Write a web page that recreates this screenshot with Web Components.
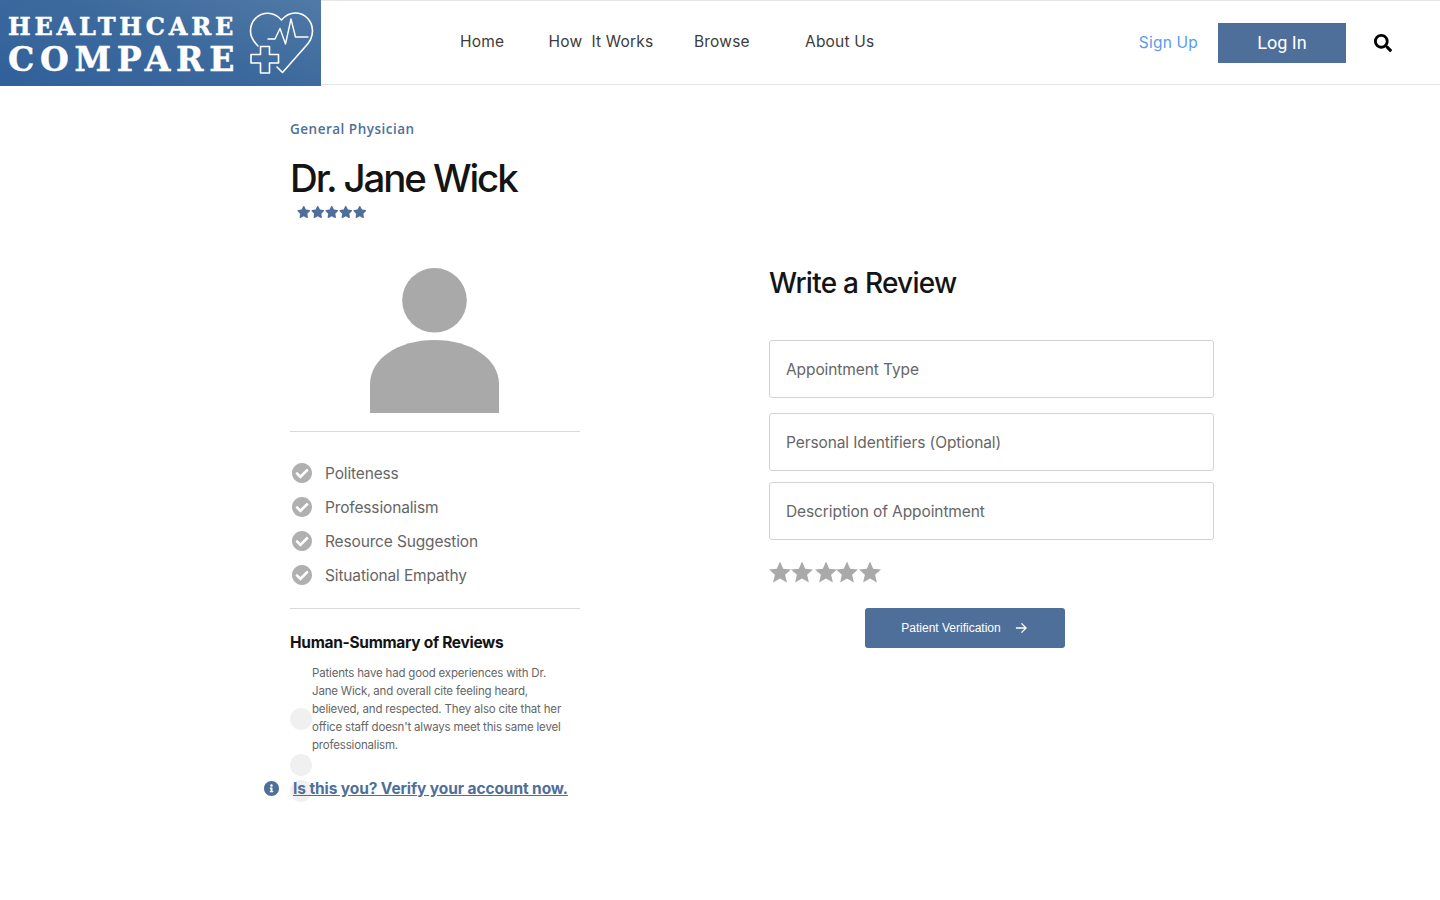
<!DOCTYPE html>
<html lang="en">
<head>
<meta charset="utf-8">
<title>Healthcare Compare</title>
<style>
html,body{margin:0;padding:0;background:#fff}
body{font-family:"Open Sans","Liberation Sans",sans-serif;min-height:900px}
</style>
</head>
<body>
<hc-header></hc-header>
<hc-main>
  <hc-profile slot="left"></hc-profile>
  <hc-review slot="right"></hc-review>
</hc-main>
<script>
const def=(name,html,init)=>customElements.define(name,class extends HTMLElement{
  constructor(){super();this.attachShadow({mode:'open'}).innerHTML=html;}
  connectedCallback(){init&&init(this)}
});
const FA_STAR='M259.3 17.8L194 150.2 47.9 171.5c-26.2 3.8-36.7 36.1-17.7 54.6l105.7 103-25 145.5c-4.5 26.3 23.2 46 46.4 33.7L288 439.6l130.7 68.7c23.2 12.2 50.9-7.4 46.4-33.7l-25-145.5 105.7-103c19-18.5 8.5-50.8-17.7-54.6L382 150.2 316.7 17.8c-11.7-23.6-45.6-23.9-57.4 0z';

def('hc-logo',`<style>
:host{display:flex;width:321px;height:86px;flex:none;box-sizing:border-box;padding:12px 0 0 8px;gap:13px;background:linear-gradient(200deg,#507aa6 0%,#3d6a9d 45%,#31609a 100%);color:#fff;font-family:"DejaVu Serif",serif;font-weight:700;overflow:hidden;-webkit-text-stroke:.5px #fff}
.t{display:flex;flex-direction:column;width:228px;flex:none}
.a{font-size:24px;line-height:30px;letter-spacing:3.800px;white-space:nowrap;height:30px}
.b{font-size:33px;line-height:38px;letter-spacing:5.700px;white-space:nowrap;margin-top:-1px}
svg{flex:none;margin-top:-1px}
</style><div class="t"><span class="a">HEALTHCARE</span><span class="b">COMPARE</span></div>
<svg width="66" height="66" viewBox="0 0 66 66" fill="none" stroke="#fff" stroke-width="1.6" stroke-linejoin="round" stroke-linecap="round">
<path d="M9 35C4 30 1.500 26 1.500 20C1.500 10 9 2.200 19 2.200C25 2.200 29 5 32.500 9C36 5 40.500 2 46 2C56 2 63.500 10 63.500 20C63.500 26 61 31 56 36L33.500 61.500L28 56"/>
<path d="M11.500 35.500H20.500V43.500H29.500V52H20.500V62H11.500V52H2V43.500H11.500Z"/>
<path d="M19 28H26L31 17.500L36.500 33L42 8L46.500 26H59" stroke-width="1.400"/>
</svg>`);

def('hc-nav',`<style>
:host{display:grid;grid-template-columns:88.5px 145.500px 111px auto;margin:-2px 0 0 139px;font:15.500px/20px "Inter","Open Sans",sans-serif;color:#3c3c3c;align-items:center;white-space:pre;letter-spacing:.2px}
</style><span>Home</span><span>How  It Works</span><span>Browse</span><span>About Us</span>`);

def('hc-header',`<style>
:host{display:flex;height:85px;box-sizing:border-box;border-top:1px solid #e6e6e6;border-bottom:1px solid #e6e6e6;align-items:flex-start}
.mid{display:flex;align-items:center;height:83px}
.right{margin-left:auto;display:flex;align-items:center;height:84px;padding-right:48px}
.su{font:15.500px/20px "Inter","Open Sans",sans-serif;color:#5a9bf0;margin-right:20px;letter-spacing:.2px}
.li{width:128px;height:40px;background:#4f6f9b;color:#fff;font:18px/40px Roboto,sans-serif;text-align:center}
svg{width:18px;height:18px;margin-left:28px;display:block}
</style><hc-logo style="margin-top:-1px"></hc-logo><div class="mid"><hc-nav></hc-nav></div>
<div class="right"><span class="su">Sign Up</span><span class="li">Log In</span>
<svg viewBox="0 0 512 512"><path fill="#000" d="M505 442.700L405.300 343c-4.500-4.500-10.600-7-17-7H372c27.600-35.300 44-79.700 44-128C416 93.100 322.900 0 208 0S0 93.100 0 208s93.100 208 208 208c48.300 0 92.700-16.400 128-44v16.300c0 6.400 2.500 12.500 7 17l99.700 99.700c9.400 9.400 24.600 9.400 33.900 0l28.300-28.300c9.400-9.400 9.400-24.600.1-34zM208 336c-70.700 0-128-57.200-128-128 0-70.700 57.200-128 128-128 70.700 0 128 57.200 128 128 0 70.700-57.200 128-128 128z"/></svg></div>`);

def('hc-main',`<style>
:host{display:grid;grid-template-columns:290px 445px;column-gap:189px;padding-left:290px}
.l{display:block}
</style><div class="l"><slot name="left"></slot></div><div class="l"><slot name="right"></slot></div>`);

def('hc-check',`<style>
:host{display:flex;align-items:center;height:34px;gap:13px;margin-left:2px;font:15.500px/34px "Inter","Open Sans",sans-serif;color:#666;letter-spacing:-.15px}
svg{width:20px;height:20px;flex:none;margin-top:-2px}
</style><svg viewBox="8 8 496 496"><path fill="#b0b0b0" d="M504 256c0 136.967-111.033 248-248 248S8 392.967 8 256 119.033 8 256 8s248 111.033 248 248zM227.314 387.314l184-184c6.248-6.248 6.248-16.379 0-22.627l-22.627-22.627c-6.248-6.249-16.379-6.249-22.628 0L216 308.118l-70.059-70.059c-6.248-6.248-16.379-6.248-22.628 0l-22.627 22.627c-6.248 6.248-6.248 16.379 0 22.627l104 104c6.249 6.249 16.379 6.249 22.628.001z"/></svg><slot></slot>`);

def('hc-rating',`<style>
:host{display:flex;gap:.5px;margin:3px 0 0 7px;height:14px}
svg{width:13.500px;height:12px;margin-top:1px}
</style>`+`<svg viewBox="0 0 576 512"><path fill="#4f6f9b" d="${FA_STAR}"/></svg>`.repeat(5));

def('hc-profile',`<style>
:host{display:block;position:relative}
.spec{font:600 13.500px/18px "Open Sans",sans-serif;color:#4f6f9b;margin-top:35px;letter-spacing:.5px}
h1{margin:16px 0 0;font:500 38.500px/48px "Inter","Open Sans",sans-serif;letter-spacing:-2.100px;color:#141414;white-space:nowrap}
.av{margin-top:49px;height:145px;text-align:center}
.av svg{display:block;margin:0 auto;position:relative;left:-.500px}
hr{border:0;border-top:1px solid #d9d9d9;margin:0}
.list{margin:25px 0 15px}
h3{margin:22px 0 0;font:700 15.500px/24px "Inter","Open Sans",sans-serif;letter-spacing:-.3px;color:#141414}
.layer{position:relative;padding:9px 12px 0 22px;font:11.500px/18px "Inter","Open Sans",sans-serif;color:#666;letter-spacing:-.18px}
.dot{position:absolute;left:0;width:22px;height:22px;border-radius:50%;background:#f0f0f0}
.verify{position:relative;display:flex;align-items:center;gap:14px;margin:24px 0 0 -26px;font:700 15.500px/22px "Inter","Open Sans",sans-serif;color:#4f6f9b;white-space:nowrap;letter-spacing:-.1px}
.verify a{color:inherit;text-decoration:underline;position:relative}
.verify svg{width:15px;height:15px;flex:none;margin-top:-2px}
</style>
<div class="spec">General Physician</div>
<h1>Dr. Jane Wick</h1>
<hc-rating></hc-rating>
<div class="av"><svg width="129" height="145" viewBox="0 0 129 145"><circle cx="64.500" cy="32.300" r="32.300" fill="#a9a9a9"/><path fill="#a9a9a9" d="M0 145V116C0 91 28 72 64.500 72S129 91 129 116V145Z"/></svg></div>
<hr style="margin-top:18px">
<div class="list"><hc-check>Politeness</hc-check><hc-check>Professionalism</hc-check><hc-check>Resource Suggestion</hc-check><hc-check>Situational Empathy</hc-check></div>
<hr>
<h3>Human-Summary of Reviews</h3>
<div class="layer"><span class="dot" style="top:53px"></span><span class="dot" style="top:99px"></span><span class="dot" style="top:125px"></span>Patients have had good experiences with Dr. Jane Wick, and overall cite feeling heard, believed, and respected. They also cite that her office staff doesn't always meet this same level professionalism.</div>
<div class="verify"><svg viewBox="8 8 496 496"><path fill="#4f6f9b" d="M256 8C119.043 8 8 119.083 8 256c0 136.997 111.043 248 248 248s248-111.003 248-248C504 119.083 392.957 8 256 8zm0 110c23.196 0 42 18.804 42 42s-18.804 42-42 42-42-18.804-42-42 18.804-42 42-42zm56 254c0 6.627-5.373 12-12 12h-88c-6.627 0-12-5.373-12-12v-24c0-6.627 5.373-12 12-12h12v-64h-12c-6.627 0-12-5.373-12-12v-24c0-6.627 5.373-12 12-12h64c6.627 0 12 5.373 12 12v100h12c6.627 0 12 5.373 12 12v24z"/></svg><a>Is this you? Verify your account now.</a></div>`);

def('hc-field',`<style>
:host{display:block;height:58px;box-sizing:border-box;border:1px solid #d2d2d2;border-radius:3px;padding:1px 16px 0;font:15.500px/56px "Inter","Open Sans",sans-serif;color:#666;letter-spacing:-.1px;background:#fff}
</style><slot></slot>`);

const S='<path fill="#a9a9a9" d="M11 .5L14.200 7.800L22 8.500L16.100 13.700L17.900 21.500L11 17.400L4.100 21.500L5.900 13.700L0 8.500L7.800 7.800Z"/>';
def('hc-review',`<style>
:host{display:block;padding-top:0}
h2{margin:0;padding-top:20px;font:500 28px/36px "Inter","Open Sans",sans-serif;letter-spacing:-.75px;color:#141414;height:36px;margin-top:160px}
.f1{margin-top:39px}.f2{margin-top:15px}.f3{margin-top:11px}
.stars{display:flex;margin-top:21px;height:24px}
.stars svg{width:22px;height:22px;flex:none}
.btn{display:flex;align-items:center;justify-content:center;gap:14px;width:200px;height:40px;margin:23px 0 0 94px;padding-right:0;background:#4f6f9b;border-radius:3px;color:#fff;font:12px/40px "Liberation Sans",Arial,sans-serif;position:relative;left:2px}
.btn span{margin-left:-2px}
.btn svg{width:12px;height:12px}
</style><h2>Write a Review</h2>
<hc-field class="f1">Appointment Type</hc-field>
<hc-field class="f2">Personal Identifiers (Optional)</hc-field>
<hc-field class="f3">Description of Appointment</hc-field>
<div class="stars">
<svg viewBox="0 0 22 22">${S}</svg><svg viewBox="0 0 22 22">${S}</svg><svg viewBox="0 0 22 22" style="margin-left:2px">${S}</svg><svg viewBox="0 0 22 22" style="margin-left:-1px">${S}</svg><svg viewBox="0 0 22 22" style="margin-left:1px">${S}</svg>
</div>
<div class="btn"><span>Patient Verification</span><svg viewBox="0 0 13 13" fill="none" stroke="#fff" stroke-width="1.500"><path d="M1 6.500H12M7 1.500L12 6.500L7 11.500"/></svg></div>`);
</script>
</body>
</html>
